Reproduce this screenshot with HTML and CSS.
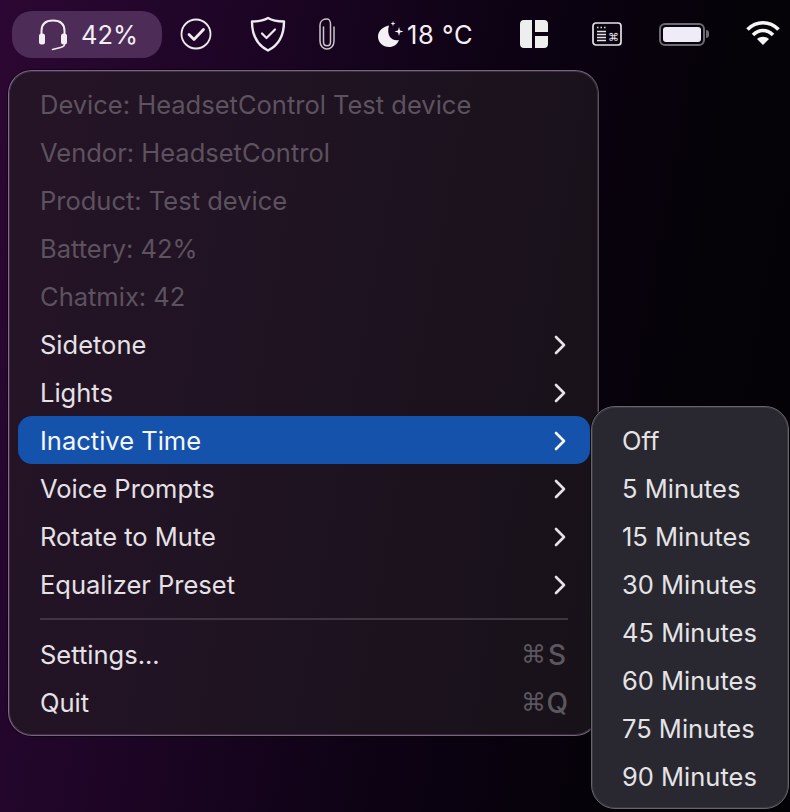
FILE: index.html
```html
<!DOCTYPE html>
<html lang="en">

<head>
    <meta charset="UTF-8">
    <meta name="viewport" content="width=device-width, initial-scale=1.0">
    <title>HeadsetControl menu</title>
    <link rel="stylesheet" href="styles.css">
</head>

<body>
    <div class="menubar">
        <div class="pill">
            <svg class="icon" width="32" height="32" viewBox="0 0 32 32">
                <path d="M4.500 18V12C4.500 5 9 1.500 16 1.500S27.500 5 27.500 12v6" fill="none" stroke="#f2eef3" stroke-width="2"/>
                <rect x="2" y="14.500" width="6" height="11" rx="2.500" fill="#f2eef3"/>
                <rect x="24" y="14.500" width="6" height="11" rx="2.500" fill="#f2eef3"/>
                <path d="M27.500 25c0 2.500-1.500 3-4 3.500l-8 2" fill="none" stroke="#f2eef3" stroke-width="1.500" stroke-linecap="round"/>
            </svg>
            <span class="pill-text">42%</span>
        </div>
        <svg class="icon check" width="32" height="32" viewBox="0 0 32 32">
            <circle cx="16" cy="16" r="14.500" fill="none" stroke="#eeeaef" stroke-width="1.800"/>
            <path d="M9 16.500l5 5L23.500 11.500" fill="none" stroke="#eeeaef" stroke-width="2.800" stroke-linecap="round" stroke-linejoin="round"/>
        </svg>
        <svg class="icon shield" width="36" height="36" viewBox="0 0 36 36">
            <path d="M18 2c4 2.500 9 3.500 16 3.500C34 19 29 29 18 34.500 7 29 2 19 2 5.500 9 5.500 14 4.500 18 2z" fill="none" stroke="#eeeaef" stroke-width="2.400" stroke-linejoin="round"/>
            <path d="M12 17.500l4.500 4.500L25 13.500" fill="none" stroke="#eeeaef" stroke-width="2.200" stroke-linecap="round" stroke-linejoin="round"/>
        </svg>
        <svg class="icon clip" width="18" height="32" viewBox="0 0 18 32">
            <path d="M5.500 9v15c0 5 7 5 7 0V6C12.500 2.500 10.500 1 9 1 6 1 2 2.500 2 7v16c0 10.500 14 10.500 14 0V9" fill="none" stroke="#c9c5cb" stroke-width="1.500" stroke-linecap="round"/>
        </svg>
        <div class="weather">
            <svg class="icon" width="30" height="30" viewBox="0 0 30 30">
                <path d="M13 6.500C8 7.500 2 11 2 17.500 2 23.500 7 28 13 28c4.500 0 8.500-2.500 10-7-7 1.500-13-4-10-14.500z" fill="#f4f0f5"/>
                <path d="M23 8l1 3.500 3.500 1-3.500 1-1 3.500-1-3.500-3.500-1 3.500-1zM17 2l.6 2 2 .6-2 .6-.6 2-.6-2-2-.6 2-.6z" fill="#f4f0f5"/>
            </svg>
            <span class="weather-text">18 °C</span>
        </div>
        <svg class="icon layout" width="28" height="28" viewBox="0 0 28 28">
            <path d="M4 0h8v28H4a4 4 0 0 1-4-4V4a4 4 0 0 1 4-4zM15 0h9a4 4 0 0 1 4 4v8H15zM15 16h13v8a4 4 0 0 1-4 4h-9z" fill="#eeeeee"/>
        </svg>
        <svg class="icon keys" width="30" height="24" viewBox="0 0 30 24">
            <rect x="1" y="1" width="28" height="22" rx="3" fill="none" stroke="#e4e2e6" stroke-width="1.700"/>
            <path d="M5 5.500h1.500M8.500 5.500h1.500M12 5.500h1.500" stroke="#e4e2e6" stroke-width="1.400"/>
            <path d="M5 9.500h9M5 12.500h9M5 15.500h9M5 18.500h9" stroke="#e4e2e6" stroke-width="1.400"/>
            <text class="keys-glyph" x="16" y="19">⌘</text>
        </svg>
        <div class="battery">
            <div class="battery-body">
                <div class="battery-fill"></div>
            </div>
            <div class="battery-cap"></div>
        </div>
        <svg class="icon wifi" width="34" height="26" viewBox="0 0 34 26">
            <path d="M1.500 9.500C10.500 .5 23.500 .5 32.500 9.500" fill="none" stroke="#f6f6f6" stroke-width="3.600"/>
            <path d="M7 15c6-6 14-6 20 0" fill="none" stroke="#f6f6f6" stroke-width="3.600"/>
            <path d="M17 25l-6-6c3.500-3 8.500-3 12 0z" fill="#f6f6f6"/>
        </svg>
    </div>

    <div class="menu">
        <div class="row disabled">Device: HeadsetControl Test device</div>
        <div class="row disabled">Vendor: HeadsetControl</div>
        <div class="row disabled">Product: Test device</div>
        <div class="row disabled">Battery: 42%</div>
        <div class="row disabled">Chatmix: 42</div>
        <div class="row">Sidetone<svg class="chevron" width="14" height="20" viewBox="0 0 14 20"><path d="M3 2l8 8-8 8" fill="none" stroke="currentColor" stroke-width="2.600" stroke-linecap="round" stroke-linejoin="round"/></svg></div>
        <div class="row">Lights<svg class="chevron" width="14" height="20" viewBox="0 0 14 20"><path d="M3 2l8 8-8 8" fill="none" stroke="currentColor" stroke-width="2.600" stroke-linecap="round" stroke-linejoin="round"/></svg></div>
        <div class="row active">Inactive Time<svg class="chevron" width="14" height="20" viewBox="0 0 14 20"><path d="M3 2l8 8-8 8" fill="none" stroke="currentColor" stroke-width="2.600" stroke-linecap="round" stroke-linejoin="round"/></svg></div>
        <div class="row">Voice Prompts<svg class="chevron" width="14" height="20" viewBox="0 0 14 20"><path d="M3 2l8 8-8 8" fill="none" stroke="currentColor" stroke-width="2.600" stroke-linecap="round" stroke-linejoin="round"/></svg></div>
        <div class="row">Rotate to Mute<svg class="chevron" width="14" height="20" viewBox="0 0 14 20"><path d="M3 2l8 8-8 8" fill="none" stroke="currentColor" stroke-width="2.600" stroke-linecap="round" stroke-linejoin="round"/></svg></div>
        <div class="row">Equalizer Preset<svg class="chevron" width="14" height="20" viewBox="0 0 14 20"><path d="M3 2l8 8-8 8" fill="none" stroke="currentColor" stroke-width="2.600" stroke-linecap="round" stroke-linejoin="round"/></svg></div>
        <div class="separator"></div>
        <div class="row">Settings...<span class="shortcut"><span class="cmd">⌘</span>S</span></div>
        <div class="row">Quit<span class="shortcut"><span class="cmd">⌘</span>Q</span></div>
    </div>

    <div class="submenu">
        <div class="sub-row">Off</div>
        <div class="sub-row">5 Minutes</div>
        <div class="sub-row">15 Minutes</div>
        <div class="sub-row">30 Minutes</div>
        <div class="sub-row">45 Minutes</div>
        <div class="sub-row">60 Minutes</div>
        <div class="sub-row">75 Minutes</div>
        <div class="sub-row">90 Minutes</div>
    </div>
</body>

</html>
```

FILE: styles.css
```css
html,
body {
    height: 100%;
}

body {
    margin: 0;
    overflow: hidden;
    position: relative;
    font-family: Inter, 'Noto Sans', sans-serif;
    color: #e8e3e9;
    background: linear-gradient(100deg, #2c0733 0%, #1e0526 25%, #0d0214 55%, #050208 80%, #030206 100%);
}

.menubar {
    height: 70px;
    box-sizing: border-box;
    padding: 11px 0 0 12px;
    display: flex;
    align-items: flex-start;
}

.icon {
    display: block;
    flex: none;
}

.pill {
    width: 150px;
    height: 47px;
    border-radius: 20px;
    background-color: #4e2c58;
    display: flex;
    align-items: center;
    padding-left: 25px;
    box-sizing: border-box;
}

.pill-text {
    margin-left: 12px;
    font-size: 25.500px;
    color: #f2eef3;
}

.check {
    margin: 7px 0 0 18px;
}

.shield {
    margin: 5px 0 0 38px;
}

.clip {
    margin: 7px 0 0 32px;
}

.weather {
    margin: 9px 0 0 40px;
    display: flex;
    align-items: center;
    width: 98px;
    height: 28px;
}

.weather-text {
    margin-left: 1px;
    font-size: 25.500px;
    letter-spacing: 0.600px;
    color: #f2eef3;
}

.layout {
    margin: 9px 0 0 46px;
}

.keys {
    margin: 11px 0 0 44px;
}

.keys-glyph {
    font-family: 'DejaVu Sans', sans-serif;
    font-size: 11px;
    fill: #e4e2e6;
}

.battery {
    margin: 11px 0 0 37px;
    display: flex;
    align-items: center;
    height: 24px;
}

.battery-body {
    width: 46px;
    height: 23px;
    box-sizing: border-box;
    border: 2px solid #6c6a72;
    border-radius: 6px;
    padding: 2px;
}

.battery-fill {
    height: 100%;
    background-color: #efecf8;
    border-radius: 3px;
}

.battery-cap {
    width: 3px;
    height: 8px;
    margin-left: 1px;
    background-color: #6c6a72;
    border-radius: 0 3px 3px 0;
}

.wifi {
    margin: 9px 0 0 37px;
}

.menu {
    width: 591px;
    height: 666px;
    margin-left: 8px;
    padding: 9px 8px 0 9px;
    box-sizing: border-box;
    border: 1px solid;
    border-color: #7a6281 #5e5763 #7a6281 #846b8c;
    border-radius: 24px;
    background: linear-gradient(100deg, #251426 0%, #1f1322 45%, #171118 100%);
    box-shadow: 0 0 0 1px rgba(0, 0, 0, 0.55), inset 0 0 0 1px rgba(125, 100, 135, 0.3);
}

.row {
    height: 48px;
    box-sizing: border-box;
    padding: 1px 22px 0;
    display: flex;
    align-items: center;
    justify-content: space-between;
    font-size: 25.500px;
    color: #e6e1e7;
    border-radius: 14px;
}

.disabled {
    color: #5d525f;
}

.active {
    background: #1452ac;
    color: #f4f6fb;
}

.chevron {
    margin-right: 1px;
}

.separator {
    height: 2px;
    margin: 10px 22px 10px;
    background-color: #3f3641;
}

.shortcut {
    width: 47px;
    white-space: nowrap;
    display: flex;
    align-items: center;
    font-size: 28px;
    font-weight: 500;
    color: #5c565e;
}

.cmd {
    width: 27px;
    font-family: 'DejaVu Sans', sans-serif;
    font-size: 25px;
    font-weight: 400;
}

.submenu {
    position: absolute;
    left: 591px;
    top: 406px;
    width: 198px;
    height: 403px;
    padding: 9px 0 0 30px;
    box-sizing: border-box;
    border: 1px solid #66656c;
    border-radius: 24px;
    background-color: #29272f;
    box-shadow: 0 0 0 1px rgba(0, 0, 0, 0.5), inset 0 0 0 1px rgba(100, 100, 108, 0.3);
}

.sub-row {
    height: 48px;
    display: flex;
    align-items: center;
    font-size: 25.500px;
    color: #e4e3e6;
}
```
